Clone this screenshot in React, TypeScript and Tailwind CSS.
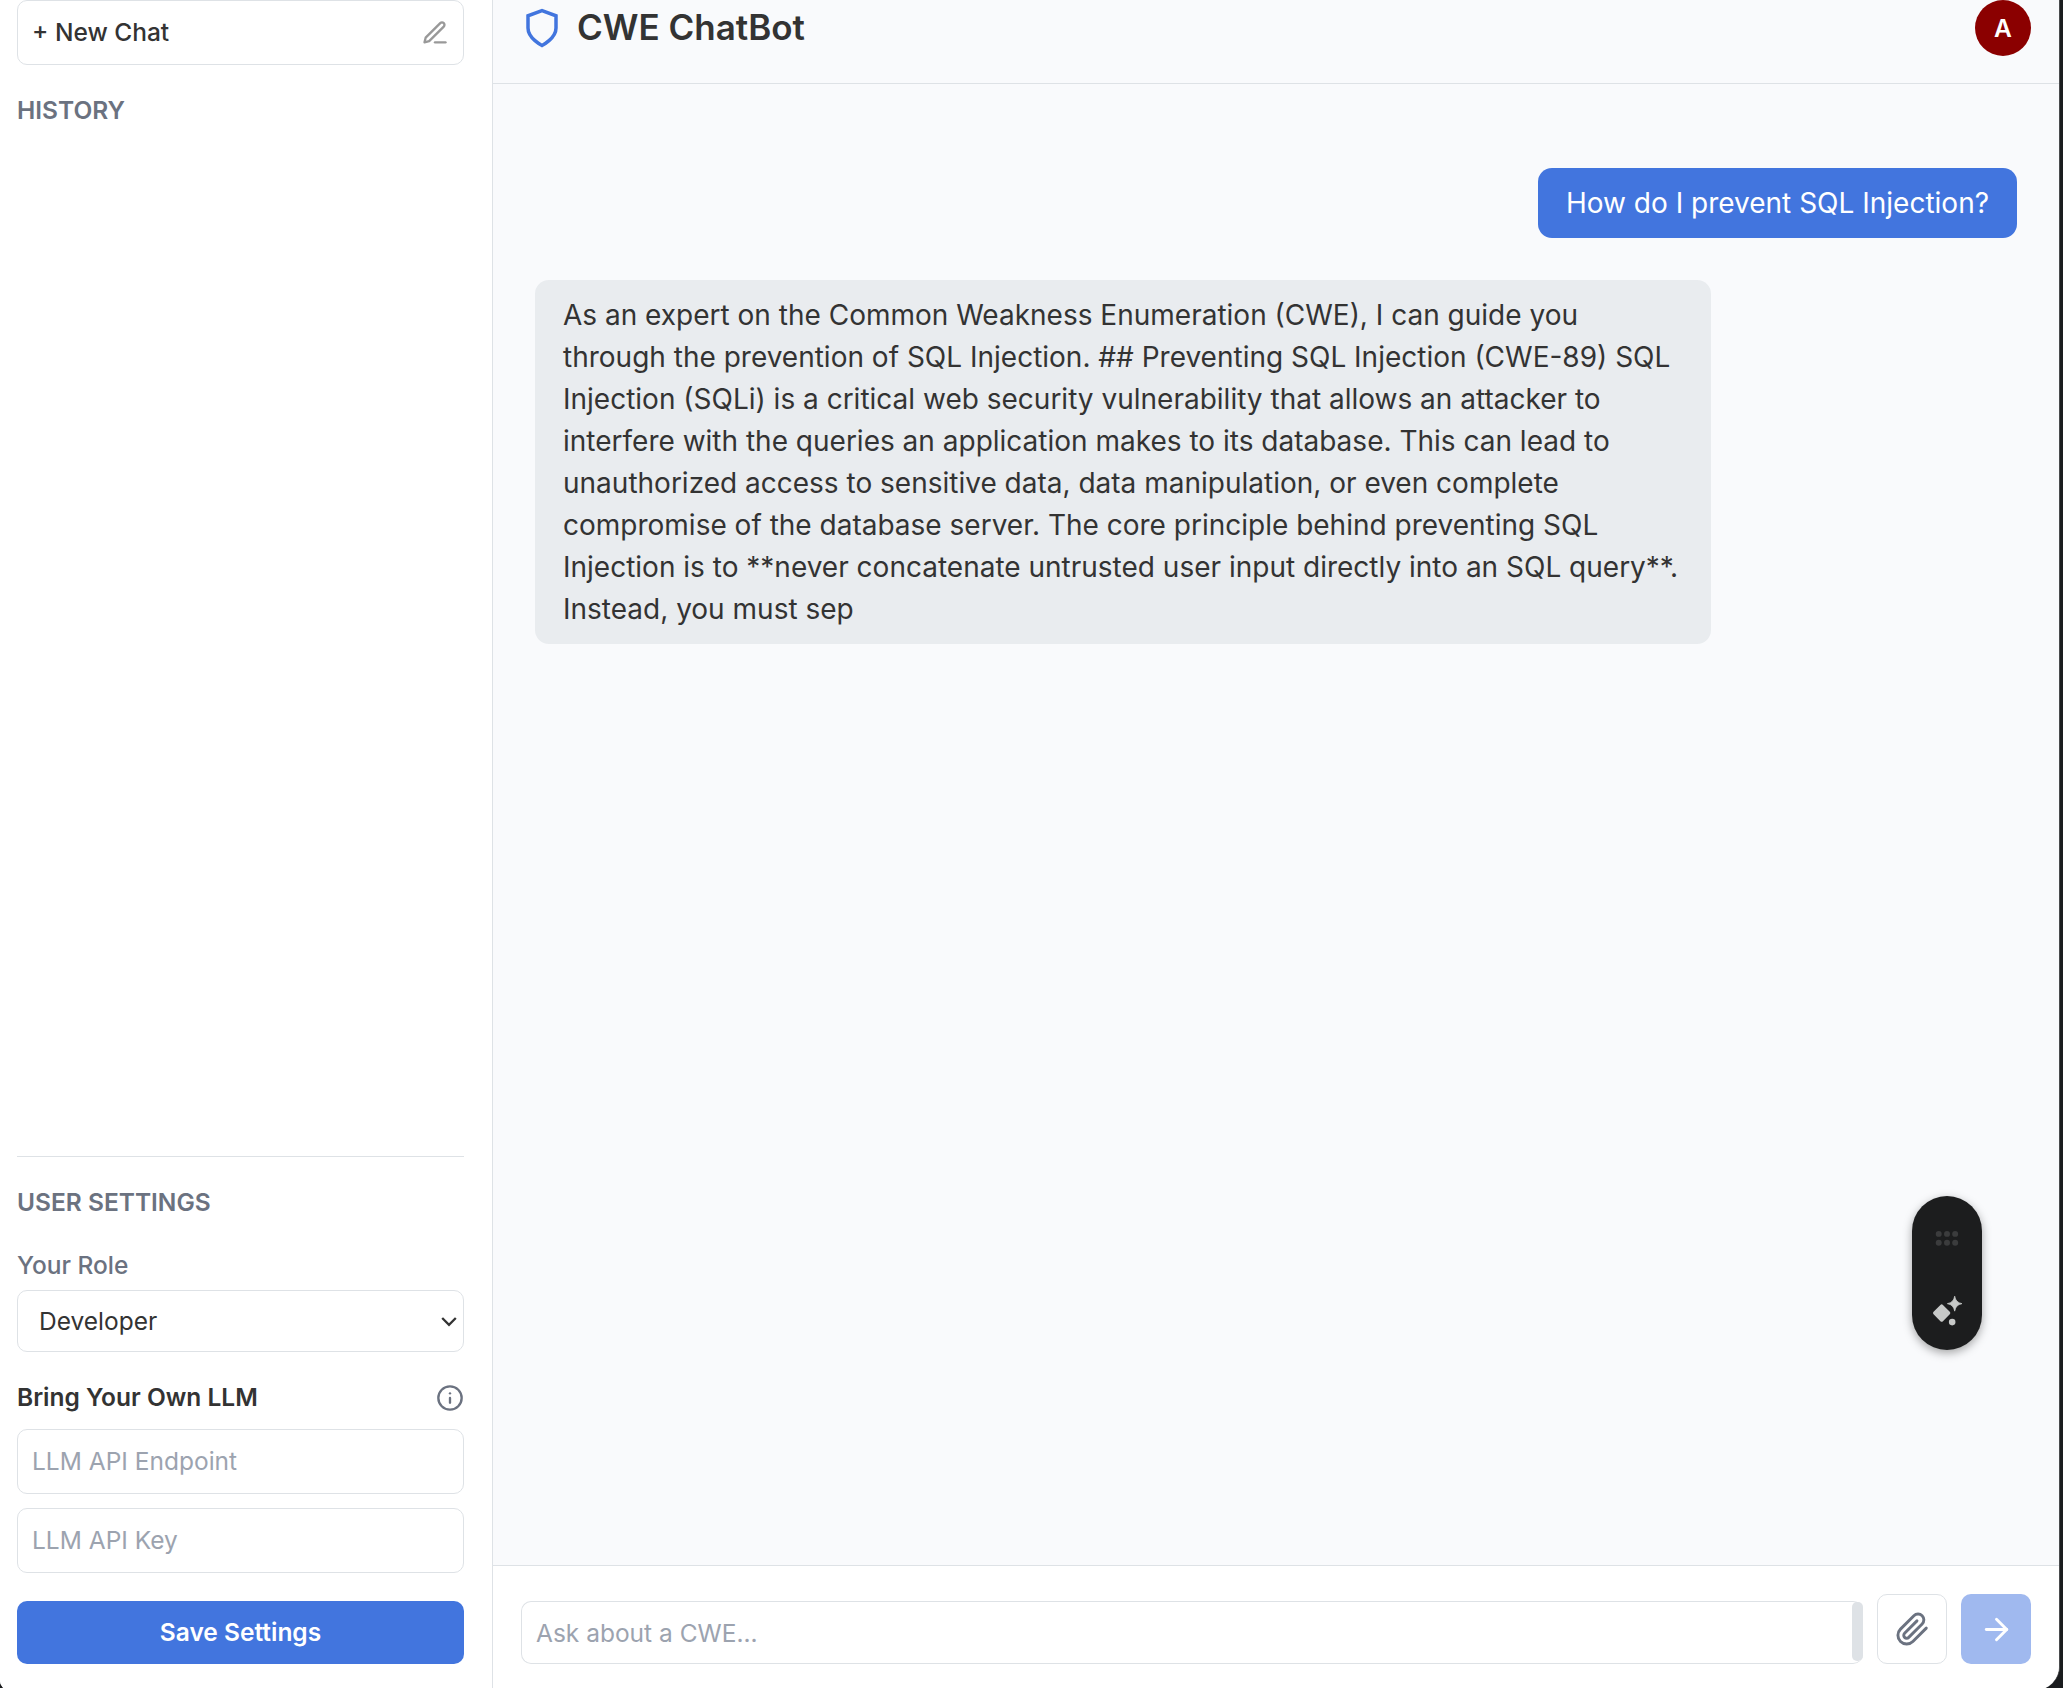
import React from "react";
import { Info, ArrowRight } from "lucide-react";

function Sidebar() {
  return (
    <aside className="flex w-[493px] shrink-0 flex-col border-r border-[#dee2e6] bg-white pl-[17px] pr-7 text-[24.5px] leading-[35px] text-[#333333]">
      <button className="flex h-[65px] shrink-0 items-center justify-between rounded-[10px] border border-[#dee2e6] px-[14px] font-medium">
        <span>+ New Chat</span>
        <svg className="size-7 text-[#999999]" viewBox="0 0 24 24" fill="none" stroke="currentColor" strokeWidth="2" strokeLinecap="round" strokeLinejoin="round">
          <path d="M12 20h9" />
          <path d="M16.500 3.500a2.121 2.121 0 0 1 3 3L7 19l-4 1 1-4L16.500 3.500z" />
        </svg>
      </button>
      <h2 className="mt-7 font-semibold text-[#6b7280]">HISTORY</h2>
      <div className="flex-1" />
      <section className="flex flex-col border-t border-[#dee2e6] pb-[26px] pt-7">
        <h2 className="font-semibold text-[#6b7280]">USER SETTINGS</h2>
        <label className="mt-7 font-medium text-[#6b7280]">Your Role</label>
        <div className="mt-[7px] flex h-[62px] items-center justify-between rounded-[10px] border border-[#dee2e6] pl-[21px] pr-1">
          <span>Developer</span>
          <svg className="h-5 w-5" viewBox="0 0 20 20" fill="none" stroke="currentColor" strokeWidth="2.3">
            <path d="M3.2 7 10 13.800l6.800-6.800" />
          </svg>
        </div>
        <div className="mt-7 flex items-center justify-between">
          <span className="font-semibold">Bring Your Own LLM</span>
          <Info className="size-7 text-[#6b7280]" strokeWidth={2} />
        </div>
        <div className="mt-[14px] flex h-[65px] items-center rounded-[10px] border border-[#dee2e6] px-[14px] text-[#9ca3af]">LLM API Endpoint</div>
        <div className="mt-[14px] flex h-[65px] items-center rounded-[10px] border border-[#dee2e6] px-[14px] text-[#9ca3af]">LLM API Key</div>
        <button className="mt-7 h-[63px] rounded-[10px] bg-[#4275de] font-semibold text-white">Save Settings</button>
      </section>
    </aside>
  );
}

function Header() {
  return (
    <header className="flex h-[84px] shrink-0 items-start justify-between border-b border-[#dee2e6] pl-7 pr-7">
      <div className="flex h-14 items-center gap-[14px]">
        <svg className="size-[42px] text-[#4275de]" viewBox="0 0 24 24" fill="none" stroke="currentColor" strokeWidth="2">
          <path d="M12 22s8-4 8-10V5l-8-3-8 3v7c0 6 8 10 8 10z" />
        </svg>
        <h1 className="mb-[2px] text-[35px] font-semibold leading-[49px]">CWE ChatBot</h1>
      </div>
      <div className="flex size-14 items-center justify-center rounded-full bg-[#8b0000] text-[24.5px] font-semibold text-white">A</div>
    </header>
  );
}

function Messages() {
  return (
    <div className="flex flex-1 flex-col gap-[42px] px-[42px] pt-[84px] text-[28px] leading-[42px]">
      <div className="self-end rounded-[14px] bg-[#4275de] px-7 py-[14px] text-white">How do I prevent SQL Injection?</div>
      <div className="w-[1176px] self-start rounded-[14px] bg-[#e9ecef] px-7 py-[14px]">
        As an expert on the Common Weakness Enumeration (CWE), I can guide you through the prevention of SQL Injection. ## Preventing SQL Injection (CWE-89) SQL Injection (SQLi) is a critical web security vulnerability that allows an attacker to interfere with the queries an application makes to its database. This can lead to unauthorized access to sensitive data, data manipulation, or even complete compromise of the database server. The core principle behind preventing SQL Injection is to **never concatenate untrusted user input directly into an SQL query**. Instead, you must sep
      </div>
    </div>
  );
}

function Composer() {
  return (
    <footer className="flex h-[125px] shrink-0 items-end gap-[14px] border-t border-[#dee2e6] bg-white px-7 pb-[26px]">
      <div className="flex h-[63px] flex-1 items-stretch justify-between rounded-[10px] border border-r-0 border-[#dee2e6] pl-[14px] text-[24.5px]">
        <span className="self-center pt-[2px] text-[#9ca3af]">Ask about a CWE...</span>
        <span className="mb-[2px] w-[11px] rounded-[5px] bg-[#dee2e6]" />
      </div>
      <button className="flex size-[70px] items-center justify-center rounded-[10px] border border-[#dee2e6] text-[#6b7280]">
        <svg className="size-[35px]" viewBox="0 0 24 24" fill="none" stroke="currentColor" strokeWidth="2" strokeLinecap="round" strokeLinejoin="round">
          <path d="m21.440 11.050-9.190 9.190a6 6 0 0 1-8.490-8.490l9.190-9.190a4 4 0 0 1 5.660 5.660l-9.200 9.190a2 2 0 0 1-2.830-2.830l8.490-8.480" />
        </svg>
      </button>
      <button className="flex size-[70px] items-center justify-center rounded-[10px] bg-[#a0b9ef] text-white">
        <ArrowRight className="size-[35px]" strokeWidth={2} />
      </button>
    </footer>
  );
}

function FloatingPill() {
  return (
    <div className="absolute left-[1912px] top-[1195.500px] h-[154.500px] w-[70px] rounded-full bg-[#1c1d1e] shadow-[0_3px_10px_rgba(0,0,0,0.35)]">
      <svg className="h-full w-full" viewBox="0 0 70 155">
        <g fill="#3b3c3d">
          <circle cx="26.700" cy="38" r="3" />
          <circle cx="35" cy="38" r="3" />
          <circle cx="43.200" cy="38" r="3" />
          <circle cx="26.700" cy="47" r="3" />
          <circle cx="35" cy="47" r="3" />
          <circle cx="43.200" cy="47" r="3" />
        </g>
        <g fill="#c7c9c8">
          <rect x="23" y="110.800" width="13.300" height="13.300" rx="1.800" transform="rotate(45 29.65 117.45)" />
          <path d="M42.700 100.500Q43.700 107 50 108Q43.700 109 42.700 115.500Q41.700 109 35.400 108Q41.700 107 42.700 100.500Z" stroke="#c7c9c8" strokeWidth="0.8" />
          <circle cx="40.200" cy="126.500" r="3.300" />
        </g>
      </svg>
    </div>
  );
}

export default function App() {
  return (
    <div className="relative h-[1688px] w-[2063px] overflow-hidden bg-[#1a1c1e] font-['Inter',sans-serif] text-[#333333]">
      <div className="flex h-[1690px] w-[2060px] overflow-hidden rounded-bl-[9px] rounded-br-[24px] border-r border-[#4a4c4e] bg-[#f9fafc]">
        <Sidebar />
        <main className="flex min-w-0 flex-1 flex-col">
          <Header />
          <Messages />
          <Composer />
        </main>
      </div>
      <FloatingPill />
    </div>
  );
}
